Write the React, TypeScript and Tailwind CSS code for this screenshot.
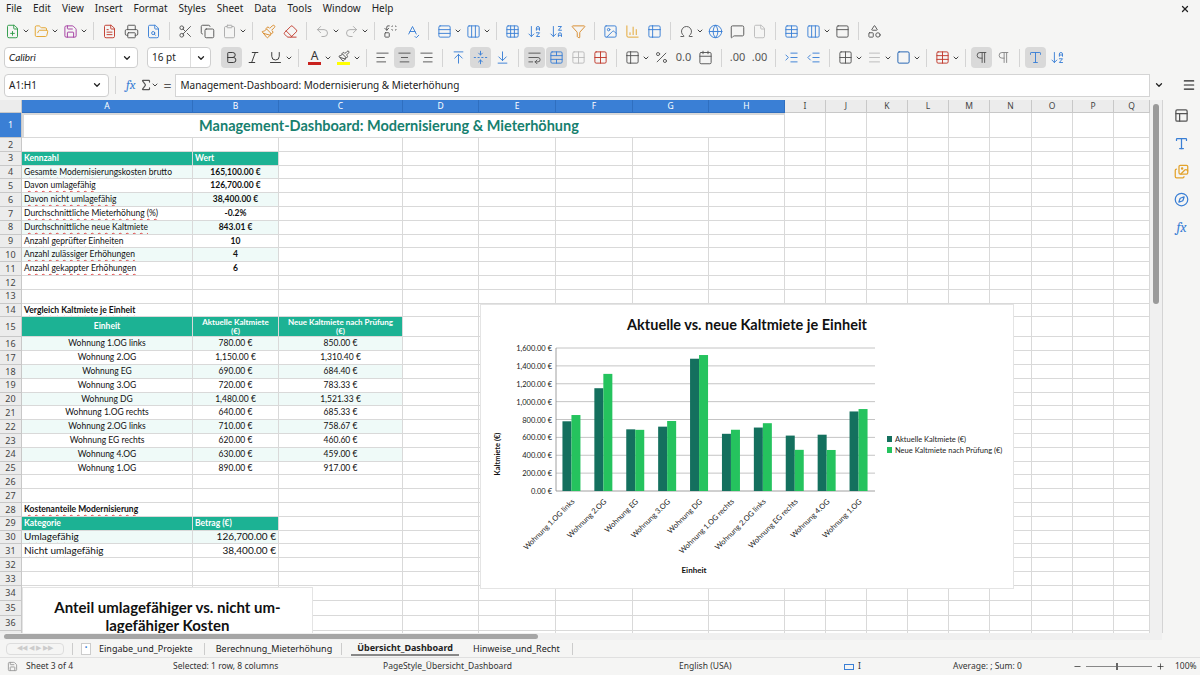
import React from 'react';
import {
  FilePlus, FolderOpen, Save, FileText, Printer, FileSearch, Scissors, Copy, Clipboard, Paintbrush, Eraser,
  Undo2, Redo2, Replace, SpellCheck, Rows3, Columns3, ArrowDownAZ, ArrowDownZA, Filter, Image, ChartColumn,
  Table2, Omega, Globe, MessageSquare, File, PanelTop, Shapes, Bold, Italic, Underline, AlignLeft, AlignCenter,
  AlignRight, ArrowUpToLine, FoldVertical, ArrowDownToLine, WrapText, TableCellsMerge, Percent, Calendar,
  IndentIncrease, IndentDecrease, Grid2x2, Square, Table, Pilcrow, ChevronDown, Menu, X, Sigma, Compass,
  PanelsTopLeft, Type, Images, Minus, Plus, Grid3x3,
} from 'lucide-react';

const UI = { fontFamily: '"Noto Sans", "Open Sans", sans-serif' };
const CELL = { fontFamily: 'Lato, "Liberation Sans", sans-serif' };

const W = [171, 86, 124, 76, 77, 77, 76, 76, 41, 41, 41, 41, 41, 42, 41, 41, 36];
const LETTERS = 'ABCDEFGHIJKLMNOPQ'.split('');

type Seg = { n: number; t?: React.ReactNode; c?: string };
type Row = { h: number; segs: Seg[] };

const head = 'bg-[#1cb294] text-white font-bold';
const tint = 'bg-[#effaf8]';
const spell = 'underline decoration-wavy decoration-[#e04040] decoration-1 underline-offset-2';

const units = [
  ['Wohnung 1.OG links', '780.00 €', '850.00 €'],
  ['Wohnung 2.OG', '1,150.00 €', '1,310.40 €'],
  ['Wohnung EG', '690.00 €', '684.40 €'],
  ['Wohnung 3.OG', '720.00 €', '783.33 €'],
  ['Wohnung DG', '1,480.00 €', '1,521.33 €'],
  ['Wohnung 1.OG rechts', '640.00 €', '685.33 €'],
  ['Wohnung 2.OG links', '710.00 €', '758.67 €'],
  ['Wohnung EG rechts', '620.00 €', '460.60 €'],
  ['Wohnung 4.OG', '630.00 €', '459.00 €'],
  ['Wohnung 1.OG', '890.00 €', '917.00 €'],
];
const cur = [780, 1150, 690, 720, 1480, 640, 710, 620, 630, 890];
const neu = [850, 1310.4, 684.4, 783.33, 1521.33, 685.33, 758.67, 460.6, 459, 917];

const kpis = [
  ['Gesamte Modernisierungskosten brutto', '165,100.00 €'],
  ['Davon umlagefähig', '126,700.00 €'],
  ['Davon nicht umlagefähig', '38,400.00 €'],
  ['Durchschnittliche Mieterhöhung (%)', '-0.2%'],
  ['Durchschnittliche neue Kaltmiete', '843.01 €'],
  ['Anzahl geprüfter Einheiten', '10'],
  ['Anzahl zulässiger Erhöhungen', '4'],
  ['Anzahl gekappter Erhöhungen', '6'],
];

function buildRows(): Row[] {
  const r: Row[] = [];
  const H = 13.8;
  r.push({ h: 25, segs: [{ n: 8, t: <span className="text-[14.5px] font-bold text-[#17806f] ml-[-30px]" style={CELL}>Management-Dashboard: Modernisierung &amp; Mieterhöhung</span>, c: 'justify-center border-2 border-[#3a7fd5]' }] });
  r.push({ h: H, segs: [] });
  r.push({ h: H, segs: [{ n: 1, t: 'Kennzahl', c: head }, { n: 1, t: 'Wert', c: head }] });
  kpis.forEach(([a, b], i) => {
    const bg = i % 2 === 0 ? tint : '';
    r.push({ h: H, segs: [{ n: 1, t: <span className={spell}>{a}</span>, c: bg }, { n: 1, t: b, c: `${bg} justify-center font-bold` }] });
  });
  r.push({ h: H, segs: [] });
  r.push({ h: H, segs: [] });
  r.push({ h: H, segs: [{ n: 1, t: <span className={spell}>Vergleich Kaltmiete je Einheit</span>, c: 'font-bold' }] });
  r.push({
    h: 20, segs: [
      { n: 1, t: 'Einheit', c: `${head} justify-center` },
      { n: 1, t: <span className="text-center leading-[9px] text-[8px]">Aktuelle Kaltmiete<br />(€)</span>, c: `${head} justify-center` },
      { n: 1, t: <span className="text-center leading-[9px] text-[8px]">Neue Kaltmiete nach Prüfung<br />(€)</span>, c: `${head} justify-center` },
    ],
  });
  units.forEach(([a, b, c], i) => {
    const bg = i % 2 === 0 ? tint : '';
    r.push({ h: H, segs: [{ n: 1, t: a, c: `${bg} justify-center` }, { n: 1, t: b, c: `${bg} justify-center` }, { n: 1, t: c, c: `${bg} justify-center` }] });
  });
  r.push({ h: H, segs: [] });
  r.push({ h: H, segs: [] });
  r.push({ h: H, segs: [{ n: 1, t: <span className={spell}>Kostenanteile Modernisierung</span>, c: 'font-bold' }] });
  r.push({ h: H, segs: [{ n: 1, t: 'Kategorie', c: head }, { n: 1, t: 'Betrag (€)', c: head }] });
  r.push({ h: H, segs: [{ n: 1, t: <span className={`${spell} text-[10px]`}>Umlagefähig</span>, c: tint }, { n: 1, t: <span className="text-[10px]">126,700.00 €</span>, c: `${tint} justify-end` }] });
  r.push({ h: H, segs: [{ n: 1, t: <span className={`${spell} text-[10px]`}>Nicht umlagefähig</span> }, { n: 1, t: <span className="text-[10px]">38,400.00 €</span>, c: 'justify-end' }] });
  r.push({ h: H, segs: [] });
  r.push({ h: H, segs: [] });
  r.push({ h: 15, segs: [] });
  r.push({ h: 15, segs: [] });
  r.push({ h: 15, segs: [] });
  r.push({ h: 15, segs: [] });
  return r;
}

function GridRow({ idx, row }: { idx: number; row: Row }) {
  const cells: React.ReactNode[] = [];
  let col = 0;
  row.segs.forEach((s, k) => {
    const w = W.slice(col, col + s.n).reduce((a, b) => a + b, 0);
    cells.push(
      <div key={k} className={`shrink-0 flex items-center px-[2px] border-r border-b border-[#d9d9d9] overflow-hidden whitespace-nowrap text-[8.5px] text-[#111] ${s.c || ''}`} style={{ width: w }}>
        {s.t}
      </div>
    );
    col += s.n;
  });
  for (; col < W.length; col++) {
    cells.push(<div key={'e' + col} className="shrink-0 border-r border-b border-[#d9d9d9]" style={{ width: W[col] }} />);
  }
  const sel = idx === 1;
  return (
    <div className="flex shrink-0" style={{ height: row.h, ...CELL }}>
      <div className={`w-[22px] shrink-0 flex items-center justify-center text-[9px] border-r border-b border-[#c8c8c8] ${sel ? 'bg-[#3a7fd5] text-white' : 'bg-[#ececec] text-[#444]'}`} style={UI}>
        {idx}
      </div>
      {cells}
    </div>
  );
}

function Chart() {
  const y = (v: number) => 187 - (v / 1600) * 143;
  const gw = 31.9;
  return (
    <svg width="534" height="285" className="block" style={CELL}>
      <rect x="0.5" y="0.5" width="533" height="284" fill="white" stroke="#e4e4e4" />
      <text x="267" y="26" textAnchor="middle" fontSize="14.5" fontWeight="bold" fill="#111">Aktuelle vs. neue Kaltmiete je Einheit</text>
      {[0, 1, 2, 3, 4, 5, 6, 7, 8].map(i => {
        const v = i * 200;
        return (
          <g key={i}>
            <line x1="76" x2="395" y1={y(v)} y2={y(v)} stroke={i === 0 ? '#888' : '#b5b5b5'} strokeWidth="0.8" />
            <text x="72" y={y(v) + 3} textAnchor="end" fontSize="7.5" fill="#222">{v.toLocaleString('en-US', { minimumFractionDigits: 2 })} €</text>
          </g>
        );
      })}
      <line x1="76" x2="76" y1="44" y2="187" stroke="#888" strokeWidth="0.8" />
      {cur.map((c, i) => {
        const cx = 76 + gw * (i + 0.5);
        return (
          <g key={i}>
            <rect x={cx - 9.5} y={y(c)} width="9" height={187 - y(c)} fill="#14705e" />
            <rect x={cx - 0.5} y={y(neu[i])} width="9" height={187 - y(neu[i])} fill="#25c35e" />
            <text x={cx + 3} y="198" textAnchor="end" fontSize="7.5" fill="#222" transform={`rotate(-45 ${cx + 3} 198)`}>{units[i][0]}</text>
          </g>
        );
      })}
      <text x="20" y="150" textAnchor="middle" fontSize="7.5" fontWeight="bold" fill="#111" transform="rotate(-90 20 150)">Kaltmiete (€)</text>
      <text x="214" y="269" textAnchor="middle" fontSize="8" fontWeight="bold" fill="#111">Einheit</text>
      <rect x="407" y="132" width="5" height="6" fill="#14705e" />
      <text x="415" y="138" fontSize="7.5" fill="#222">Aktuelle Kaltmiete (€)</text>
      <rect x="407" y="143" width="5" height="6" fill="#25c35e" />
      <text x="415" y="149" fontSize="7.5" fill="#222">Neue Kaltmiete nach Prüfung (€)</text>
    </svg>
  );
}

const Dd = () => <ChevronDown size={8} strokeWidth={3} className="text-[#444] -ml-0.5" />;
const Sep = () => <div className="w-px h-[18px] bg-[#d4d4d4] mx-1" />;

function Ic({ I, c = '#555', active = false }: { I: React.ComponentType<any>; c?: string; active?: boolean }) {
  return (
    <div className={`w-[21px] h-[21px] flex items-center justify-center rounded-sm ${active ? 'bg-[#d9d9d9]' : ''}`}>
      <I size={15} strokeWidth={1.5} color={c} />
    </div>
  );
}

export default function App() {
  const rows = buildRows();
  const menus = ['File', 'Edit', 'View', 'Insert', 'Format', 'Styles', 'Sheet', 'Data', 'Tools', 'Window', 'Help'];
  return (
    <div className="w-[1200px] h-[675px] overflow-hidden bg-[#f5f5f4] flex flex-col text-[#222]" style={UI}>
      {/* menu */}
      <div className="h-[17px] flex items-center px-[6px] gap-[11px] text-[10px] shrink-0">
        {menus.map(m => <span key={m}>{m}</span>)}
        <X size={10} className="ml-auto mr-1" strokeWidth={3} />
      </div>
      {/* toolbar 1 */}
      <div className="h-[28px] flex items-center px-[2px] gap-[1px] shrink-0">
        <Ic I={FilePlus} c="#2b9a45" /><Dd /><Ic I={FolderOpen} c="#e3a32c" /><Dd /><Ic I={Save} c="#a23aa0" /><Dd /><Sep />
        <Ic I={FileText} c="#c0392b" /><Ic I={Printer} /><Ic I={FileSearch} c="#3a7fd5" /><Sep />
        <Ic I={Scissors} /><Ic I={Copy} /><Ic I={Clipboard} c="#aaa" /><Dd /><Sep />
        <Ic I={Paintbrush} c="#d88a2a" /><Ic I={Eraser} c="#c0392b" /><Sep />
        <Ic I={Undo2} c="#aaa" /><Dd /><Ic I={Redo2} c="#aaa" /><Dd /><Sep />
        <Ic I={Replace} /><Ic I={SpellCheck} c="#3a7fd5" /><Sep />
        <Ic I={Rows3} c="#3a7fd5" /><Dd /><Ic I={Columns3} c="#3a7fd5" /><Dd /><Sep />
        <Ic I={Grid3x3} c="#3a7fd5" /><Ic I={ArrowDownAZ} c="#3a7fd5" /><Ic I={ArrowDownZA} c="#3a7fd5" /><Ic I={Filter} c="#d88a2a" /><Sep />
        <Ic I={Image} c="#3a7fd5" /><Ic I={ChartColumn} c="#e3a32c" /><Ic I={Table2} c="#3a7fd5" /><Sep />
        <Ic I={Omega} /><Dd /><Ic I={Globe} c="#3a7fd5" /><Ic I={MessageSquare} /><Ic I={File} c="#bbb" /><Sep />
        <Ic I={Table} c="#3a7fd5" /><Ic I={Columns3} c="#3a7fd5" /><Dd /><Ic I={PanelTop} /><Sep />
        <Ic I={Shapes} />
      </div>
      {/* toolbar 2 */}
      <div className="h-[25px] flex items-center px-[4px] gap-[1px] shrink-0">
        <div className="w-[134px] h-[21px] bg-white border border-[#cfcfcf] rounded-sm flex items-center text-[10px] pl-1" style={CELL}>
          <span className="flex-1 italic">Calibri</span>
          <div className="w-[22px] h-full border-l border-[#ddd] flex items-center justify-center"><ChevronDown size={10} strokeWidth={3} /></div>
        </div>
        <div className="w-[64px] h-[21px] ml-[8px] bg-white border border-[#cfcfcf] rounded-sm flex items-center text-[10px] pl-1">
          <span className="flex-1">16 pt</span>
          <div className="w-[20px] h-full border-l border-[#ddd] flex items-center justify-center"><ChevronDown size={10} strokeWidth={3} /></div>
        </div>
        <div className="w-2" />
        <Ic I={Bold} c="#333" active /><Ic I={Italic} c="#333" /><Ic I={Underline} c="#333" /><Dd /><Sep />
        <div className="w-[21px] flex flex-col items-center"><span className="text-[12px] leading-[12px] text-[#333]">A</span><div className="w-[13px] h-[3px] bg-[#c9211e]" /></div><Dd />
        <div className="w-[21px] flex flex-col items-center"><Paintbrush size={12} color="#555" /><div className="w-[13px] h-[3px] bg-[#ffff00]" /></div><Dd /><Sep />
        <Ic I={AlignLeft} /><Ic I={AlignCenter} active /><Ic I={AlignRight} /><Sep />
        <Ic I={ArrowUpToLine} c="#3a7fd5" /><Ic I={FoldVertical} c="#3a7fd5" active /><Ic I={ArrowDownToLine} c="#3a7fd5" /><Sep />
        <Ic I={WrapText} active /><Ic I={TableCellsMerge} c="#3a7fd5" active /><Ic I={Grid2x2} c="#bbb" /><Ic I={Grid2x2} c="#c0392b" /><Sep />
        <Ic I={Table2} /><Dd /><Ic I={Percent} /><span className="text-[11px] text-[#555] w-[21px] text-center">0.0</span><Ic I={Calendar} /><Sep />
        <span className="text-[11px] text-[#555] w-[21px] text-center">.00</span><span className="text-[11px] text-[#555] w-[21px] text-center">.00</span><Sep />
        <Ic I={IndentIncrease} c="#3a7fd5" /><Ic I={IndentDecrease} c="#3a7fd5" /><Sep />
        <Ic I={Grid2x2} /><Dd /><Ic I={Menu} c="#bbb" /><Dd /><Ic I={Square} c="#1d5fb0" /><Dd /><Sep />
        <Ic I={Table} c="#c0392b" /><Dd /><Sep />
        <Ic I={Pilcrow} active /><Ic I={Pilcrow} c="#888" /><Sep />
        <Ic I={Type} c="#3a7fd5" active /><Ic I={ArrowDownAZ} c="#3a7fd5" />
      </div>
      {/* formula bar */}
      <div className="h-[30px] flex items-center px-[4px] shrink-0">
        <div className="w-[105px] h-[23px] bg-white border border-[#cfcfcf] rounded-sm flex items-center text-[10px] pl-1">
          <span className="flex-1">A1:H1</span>
          <div className="w-[22px] h-full flex items-center justify-center"><ChevronDown size={10} strokeWidth={3} /></div>
        </div>
        <div className="w-px h-[18px] bg-[#d4d4d4] mx-[6px]" />
        <span className="text-[13px] italic text-[#3a7fd5] font-serif mx-1">fx</span>
        <Sigma size={14} color="#555" /><Dd />
        <span className="text-[14px] mx-1 text-[#555]">=</span>
        <div className="w-[975px] h-[23px] bg-white border border-[#d4d4d4] flex items-center text-[10px] px-1">Management-Dashboard: Modernisierung &amp; Mieterhöhung</div>
        <ChevronDown size={10} strokeWidth={3} className="mx-1" />
        <Menu size={14} className="ml-[14px]" />
      </div>
      {/* main */}
      <div className="flex h-[533px] shrink-0">
        <div className="relative w-[1150px] bg-white overflow-hidden flex flex-col">
          <div className="flex h-[13px] shrink-0 text-[8.5px]">
            <div className="w-[22px] shrink-0 bg-[#ececec] border-r border-b border-[#c8c8c8]" />
            {LETTERS.map((l, i) => (
              <div key={l} className={`shrink-0 flex items-center justify-center border-r border-b ${i < 8 ? 'bg-[#3a7fd5] text-white border-[#2f6fc0]' : 'bg-[#ececec] text-[#444] border-[#c8c8c8]'}`} style={{ width: W[i] }}>{l}</div>
            ))}
          </div>
          {rows.map((r, i) => <GridRow key={i} idx={i + 1} row={r} />)}
          <div className="absolute left-[480px] top-[204px]"><Chart /></div>
          <div className="absolute left-[22px] top-[487px] w-[291px] h-[60px] bg-white border border-[#e4e4e4] flex justify-center pt-[10px]">
            <div className="text-[15px] font-bold leading-[18px] text-center text-[#111]" style={CELL}>Anteil umlagefähiger vs. nicht um-<br />lagefähiger Kosten</div>
          </div>
        </div>
        <div className="w-[12px] bg-[#f0f0f0] flex justify-center pt-[4px]">
          <div className="w-[6px] h-[200px] rounded bg-[#9a9a9a]" />
        </div>
        <div className="w-[38px] border-l border-[#d4d4d4] flex flex-col items-center gap-[13px] pt-[8px]">
          <PanelsTopLeft size={15} color="#555" />
          <Type size={15} color="#3a7fd5" />
          <Images size={15} color="#e3a32c" />
          <Compass size={15} color="#3a7fd5" />
          <span className="text-[14px] italic text-[#3a7fd5] font-serif leading-[15px]">fx</span>
        </div>
      </div>
      {/* h scrollbar */}
      <div className="h-[7px] flex items-center px-[4px] shrink-0 bg-[#f0f0f0] w-[1162px]">
        <div className="w-[534px] h-[5px] rounded bg-[#a6a6a6]" />
      </div>
      {/* tabs */}
      <div className="h-[18px] flex items-center text-[9px] shrink-0 border-b border-[#e0e0e0]">
        <div className="w-[58px] h-[12px] ml-[6px] border border-[#ddd] rounded-sm flex items-center justify-center text-[#ccc] text-[7px]">◀◀ ◀ ▶ ▶▶</div>
        <div className="w-px h-3 bg-[#ccc] mx-[8px]" />
        <div className="w-[10px] h-[12px] border border-[#ccc] bg-white text-[7px] text-[#3a7fd5] flex items-center justify-center">•</div>
        <span className="ml-[8px]">Eingabe_und_Projekte</span>
        <div className="w-px h-3 bg-[#ccc] mx-[11px]" />
        <span>Berechnung_Mieterhöhung</span>
        <div className="w-px h-3 bg-[#ccc] mx-[9px]" />
        <span className="font-bold border-b-2 border-[#888] px-[6px]">Übersicht_Dashboard</span>
        <span className="ml-[14px]">Hinweise_und_Recht</span>
        <div className="w-px h-3 bg-[#ccc] mx-3" />
      </div>
      {/* status */}
      <div className="h-[17px] flex items-center text-[8.5px] shrink-0 text-[#333]">
        <Save size={11} color="#999" className="ml-[7px]" />
        <span className="ml-[8px] w-[147px]">Sheet 3 of 4</span>
        <span className="w-[210px]">Selected: 1 row, 8 columns</span>
        <span className="w-[296px]">PageStyle_Übersicht_Dashboard</span>
        <span className="w-[165px]">English (USA)</span>
        <div className="w-[10px] h-[6px] border border-[#3a7fd5]" /><span className="ml-1 w-[95px]">I</span>
        <span className="w-[120px]">Average: ; Sum: 0</span>
        <Minus size={9} /><div className="w-[66px] h-px bg-[#888] mx-1 relative"><div className="absolute left-[30px] -top-[3px] w-[2px] h-[7px] bg-[#666]" /></div><Plus size={9} />
        <span className="ml-[10px]">100%</span>
      </div>
    </div>
  );
}
